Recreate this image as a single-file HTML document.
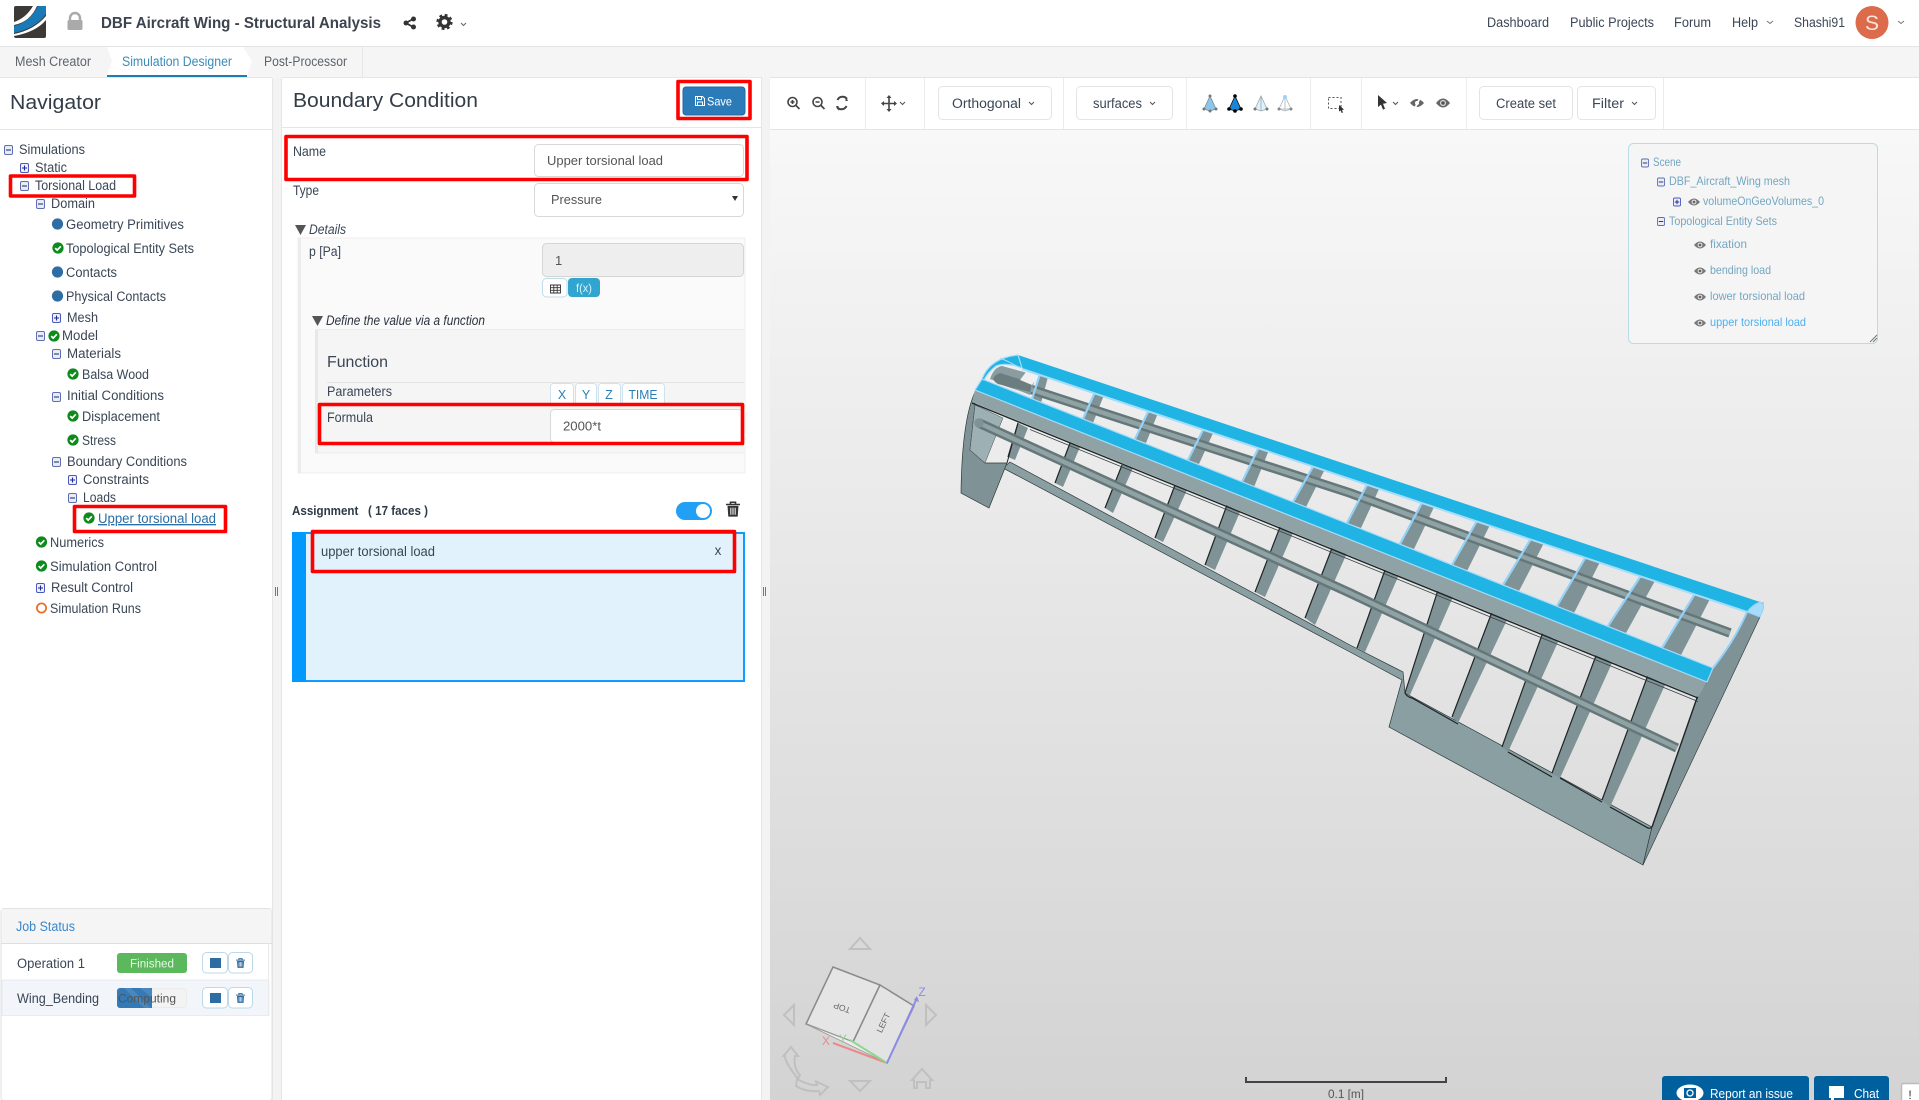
<!DOCTYPE html>
<html lang="en"><head><meta charset="utf-8"><title>DBF Aircraft Wing - Structural Analysis</title>
<style>
html,body{margin:0;padding:0;background:#fff;overflow:hidden;width:1919px;height:1100px}
svg{display:block}
text{font-family:"Liberation Sans",sans-serif;font-size:13.5px;fill:#3a4656;white-space:pre}
.h{font-size:20.5px;fill:#333d48}
.tab{font-size:13.5px;fill:#5d646c}
.sc{font-size:12px;fill:#73a6c2}
.gr{fill:#555}
</style></head><body>
<svg xmlns="http://www.w3.org/2000/svg" width="1919" height="1100" viewBox="0 0 1919 1100">
<defs>
<linearGradient id="vb" x1="0" y1="129" x2="0" y2="1100" gradientUnits="userSpaceOnUse"><stop offset="0" stop-color="#f8f8f8"/><stop offset="1" stop-color="#d3d3d3"/></linearGradient>
<symbol id="mi" viewBox="0 0 9 10" overflow="visible"><rect x=".5" y=".5" width="8" height="9" rx="1.5" fill="#e9ecf6" stroke="#5d6fb3"/><path d="M2 5h5" stroke="#2b3a70" stroke-width="1.1"/></symbol>
<symbol id="pl" viewBox="0 0 9 10" overflow="visible"><rect x=".5" y=".5" width="8" height="9" rx="1.5" fill="#eef0fb" stroke="#4a58b8"/><path d="M2 5h5M4.5 2.5v5" stroke="#1c2a9a" stroke-width="1.1"/></symbol>
<symbol id="ck" viewBox="0 0 12 12" overflow="visible"><circle cx="6" cy="6" r="5.6" fill="#0d8a1c"/><path d="M3.2 6.1l2 2 3.6-3.8" fill="none" stroke="#fff" stroke-width="1.7"/></symbol>
<symbol id="ey" viewBox="0 0 12 8" overflow="visible"><path d="M0 4Q6-3 12 4Q6 11 0 4Z" fill="#777"/><circle cx="6" cy="4" r="2.4" fill="#e8e8e8"/><circle cx="6" cy="4" r="1.4" fill="#666"/></symbol>
<symbol id="tr" viewBox="0 0 11 12" overflow="visible"><path d="M0 2.5h11M3.5 2.5V.7h4v1.8" fill="none" stroke="currentColor" stroke-width="1.2"/><path d="M1.2 3.5h8.6l-.6 8.5H1.8z" fill="currentColor"/><path d="M3.8 5v5.5M5.5 5v5.5M7.2 5v5.5" stroke="#fff" stroke-width=".8"/></symbol>
</defs>

<!-- top bar -->
<rect width="1919" height="1100" fill="#fff"/>
<path d="M0 46.5h1919" stroke="#e4e4e4"/>
<rect x="14" y="6" width="32" height="32" rx="2" fill="#3c3936"/>
<path d="M38 6h8v8Q36 28 14 33v-7Q30 22 38 6Z" fill="#1a7ab8"/>
<path d="M33 6h4Q30 22 14 25v-3Q26 18 33 6Z" fill="#fff"/>
<path d="M46 16v4Q36 32 14 36v-2Q34 30 46 16Z" fill="#fff"/>
<path d="M70 21v-3a5 5 0 0 1 10 0v3" fill="none" stroke="#aaa" stroke-width="2.4"/><rect x="67.500" y="20" width="15" height="10" rx="1.5" fill="#aaa"/>
<text x="101" y="28" textLength="280" lengthAdjust="spacingAndGlyphs" style="font-size:15.5px;font-weight:bold;fill:#3c4450">DBF Aircraft Wing - Structural Analysis</text>
<path d="M413 19L406 23L413 27" fill="none" stroke="#333" stroke-width="1.8"/><circle cx="413.500" cy="19" r="2.500" fill="#333"/><circle cx="406" cy="23" r="2.500" fill="#333"/><circle cx="413.500" cy="27" r="2.500" fill="#333"/>
<circle cx="444.500" cy="22" r="4.500" fill="none" stroke="#333" stroke-width="3.4"/><circle cx="444.500" cy="22" r="7" fill="none" stroke="#333" stroke-width="2.2" stroke-dasharray="2.8 2.7"/>
<path d="M461 23l2.500 2.500l2.500-2.500" fill="none" stroke="#666"/>
<g>
<text x="1487" y="27" textLength="62" lengthAdjust="spacingAndGlyphs">Dashboard</text>
<text x="1570" y="27" textLength="84" lengthAdjust="spacingAndGlyphs">Public Projects</text>
<text x="1674" y="27" textLength="37" lengthAdjust="spacingAndGlyphs">Forum</text>
<text x="1732" y="27" textLength="26" lengthAdjust="spacingAndGlyphs">Help</text>
<text x="1794" y="27" textLength="51" lengthAdjust="spacingAndGlyphs">Shashi91</text>
</g>
<path d="M1767 21l3 2.500l3-2.500M1898 21l3 2.500l3-2.500" fill="none" stroke="#777"/>
<circle cx="1872" cy="22.500" r="16.500" fill="#dc6b4b"/>
<text x="1872" y="30" text-anchor="middle" style="font-size:21px;fill:#fbe4dc">S</text>

<!-- tabs -->
<rect y="47" width="1919" height="31" fill="#f5f5f5"/>
<path d="M107 47H243L252 61L247 75V77H107V75L112 61Z" fill="#fff"/>
<rect x="107" y="75" width="140" height="2" fill="#1c7cb4"/>
<path d="M362.500 47v30" stroke="#e6e6e6"/>
<text class="tab" x="15" y="66" textLength="76" lengthAdjust="spacingAndGlyphs">Mesh Creator</text>
<text class="tab" x="122" y="66" textLength="110" lengthAdjust="spacingAndGlyphs" style="fill:#3a8cb9">Simulation Designer</text>
<text class="tab" x="264" y="66" textLength="83" lengthAdjust="spacingAndGlyphs">Post-Processor</text>

<!-- panels -->
<rect x="0" y="78" width="272" height="1022" fill="#fff"/>
<rect x="272" y="78" width="10" height="1022" fill="#f3f3f3"/>
<path d="M272.500 78v1022M281.500 78v1022" stroke="#e6e6e6"/>
<path d="M0 77.500h272M282 77.500h480M0 129.500h272M282 127.500h479" stroke="#e6e6e6"/>
<rect x="761" y="78" width="9" height="1022" fill="#f3f3f3"/>
<path d="M761.500 78v1022" stroke="#e6e6e6"/>
<path d="M275.500 587v9M277.500 587v9M763.500 587v9M765.500 587v9" stroke="#777"/>
<text class="h" x="10" y="109" textLength="91" lengthAdjust="spacingAndGlyphs">Navigator</text>
<text class="h" x="293" y="107" textLength="185" lengthAdjust="spacingAndGlyphs">Boundary Condition</text>

<!-- tree -->
<use href="#mi" x="4" y="145" width="9" height="10"/><text x="19" y="154" textLength="66" lengthAdjust="spacingAndGlyphs">Simulations</text>
<use href="#pl" x="20" y="163" width="9" height="10"/><text x="35" y="172" textLength="32" lengthAdjust="spacingAndGlyphs">Static</text>
<use href="#mi" x="20" y="181" width="9" height="10"/><text x="35" y="190" textLength="81" lengthAdjust="spacingAndGlyphs">Torsional Load</text>
<use href="#mi" x="36" y="199" width="9" height="10"/><text x="51" y="208" textLength="44" lengthAdjust="spacingAndGlyphs">Domain</text>
<circle cx="57.500" cy="224" r="5.600" fill="#2e6da4"/><text x="66" y="229" textLength="118" lengthAdjust="spacingAndGlyphs">Geometry Primitives</text>
<use href="#ck" x="52" y="242" width="12" height="12"/><text x="66" y="253" textLength="128" lengthAdjust="spacingAndGlyphs">Topological Entity Sets</text>
<circle cx="57.500" cy="272" r="5.600" fill="#2e6da4"/><text x="66" y="277" textLength="51" lengthAdjust="spacingAndGlyphs">Contacts</text>
<circle cx="57.500" cy="296" r="5.600" fill="#2e6da4"/><text x="66" y="301" textLength="100" lengthAdjust="spacingAndGlyphs">Physical Contacts</text>
<use href="#pl" x="52" y="313" width="9" height="10"/><text x="67" y="322" textLength="31" lengthAdjust="spacingAndGlyphs">Mesh</text>
<use href="#mi" x="36" y="331" width="9" height="10"/><use href="#ck" x="48" y="330" width="12" height="12"/><text x="62" y="340" textLength="36" lengthAdjust="spacingAndGlyphs">Model</text>
<use href="#mi" x="52" y="349" width="9" height="10"/><text x="67" y="358" textLength="54" lengthAdjust="spacingAndGlyphs">Materials</text>
<use href="#ck" x="67" y="368" width="12" height="12"/><text x="82" y="379" textLength="67" lengthAdjust="spacingAndGlyphs">Balsa Wood</text>
<use href="#mi" x="52" y="392" width="9" height="10"/><text x="67" y="400" textLength="97" lengthAdjust="spacingAndGlyphs">Initial Conditions</text>
<use href="#ck" x="67" y="410" width="12" height="12"/><text x="82" y="421" textLength="78" lengthAdjust="spacingAndGlyphs">Displacement</text>
<use href="#ck" x="67" y="434" width="12" height="12"/><text x="82" y="445" textLength="34" lengthAdjust="spacingAndGlyphs">Stress</text>
<use href="#mi" x="52" y="457" width="9" height="10"/><text x="67" y="466" textLength="120" lengthAdjust="spacingAndGlyphs">Boundary Conditions</text>
<use href="#pl" x="68" y="475" width="9" height="10"/><text x="83" y="484" textLength="66" lengthAdjust="spacingAndGlyphs">Constraints</text>
<use href="#mi" x="68" y="493" width="9" height="10"/><text x="83" y="502" textLength="33" lengthAdjust="spacingAndGlyphs">Loads</text>
<use href="#ck" x="83" y="512" width="12" height="12"/><text x="98" y="523" textLength="118" lengthAdjust="spacingAndGlyphs" style="fill:#2a6ea6;text-decoration:underline">Upper torsional load</text>
<use href="#ck" x="35.500" y="536" width="12" height="12"/><text x="50" y="547" textLength="54" lengthAdjust="spacingAndGlyphs">Numerics</text>
<use href="#ck" x="35.500" y="560" width="12" height="12"/><text x="50" y="571" textLength="107" lengthAdjust="spacingAndGlyphs">Simulation Control</text>
<use href="#pl" x="36" y="583" width="9" height="10"/><text x="51" y="592" textLength="82" lengthAdjust="spacingAndGlyphs">Result Control</text>
<circle cx="41.500" cy="608" r="4.600" fill="none" stroke="#e8702a" stroke-width="1.800"/><text x="50" y="613" textLength="91" lengthAdjust="spacingAndGlyphs">Simulation Runs</text>

<!-- job status -->
<rect x="1" y="908.500" width="271" height="192" rx="3" fill="#fff" stroke="#e2e2e2"/>
<rect x="1.500" y="909" width="270" height="34" fill="#f5f5f5"/><path d="M1 943.500h271" stroke="#dfdfdf"/>
<text x="16" y="931" textLength="59" lengthAdjust="spacingAndGlyphs" style="fill:#3b87c9">Job Status</text>
<rect x="2" y="980" width="267" height="35.500" fill="#f2f5fa" stroke="#e4e8ee" stroke-width=".8"/>
<path d="M268.500 944v72" stroke="#eaeaea"/>
<text x="17" y="968" textLength="68" lengthAdjust="spacingAndGlyphs">Operation 1</text>
<text x="17" y="1003" textLength="82" lengthAdjust="spacingAndGlyphs">Wing_Bending</text>
<rect x="117" y="953" width="70" height="20" rx="3" fill="#5cb85c"/>
<text x="152" y="967.500" text-anchor="middle" textLength="44" lengthAdjust="spacingAndGlyphs" style="font-size:11.500px;fill:#e8f8e8">Finished</text>
<rect x="117.500" y="988.500" width="69" height="19" rx="3" fill="#f3f3f3" stroke="#ebebeb"/>
<path d="M120 988h32v20h-32a3 3 0 0 1-3-3v-14a3 3 0 0 1 3-3Z" fill="#337ab7"/>
<path d="M124 988h7l20 20h-7ZM140 988h10l2 2v8Z" fill="#5a94c6" opacity=".55"/>
<text x="118" y="1002.500" textLength="58" lengthAdjust="spacingAndGlyphs" style="font-size:11.500px;fill:#555">Computing</text>
<g fill="#fff" stroke="#bcd9e8"><rect x="202.500" y="952.500" width="25" height="20.500" rx="4"/><rect x="228.500" y="952.500" width="24" height="20.500" rx="4"/><rect x="202.500" y="987.500" width="25" height="20.500" rx="4"/><rect x="228.500" y="987.500" width="24" height="20.500" rx="4"/></g>
<rect x="210" y="958" width="11" height="10" fill="#2e6da4"/><rect x="210" y="993" width="11" height="10" fill="#2e6da4"/>
<g color="#2e6da4"><use href="#tr" x="236" y="958" width="9" height="10"/><use href="#tr" x="236" y="993" width="9" height="10"/></g>

<!-- boundary form -->
<rect x="683" y="87" width="62" height="28" rx="3" fill="#2b7bb9" stroke="#216aa3"/>
<path d="M695.500 96.500h7l2 2v7h-9zM697.500 96.500v3h4v-3M697.500 105.500v-3.500h5v3.500" fill="none" stroke="#fff"/>
<text x="707" y="105.500" textLength="25" lengthAdjust="spacingAndGlyphs" style="font-size:12px;fill:#fff">Save</text>

<text x="293" y="156" textLength="33" lengthAdjust="spacingAndGlyphs">Name</text>
<rect x="534.500" y="144.500" width="209" height="32" rx="4" fill="#fff" stroke="#d8d8d8"/>
<text class="gr" x="547" y="165" textLength="116" lengthAdjust="spacingAndGlyphs" style="font-size:13px">Upper torsional load</text>
<text x="293" y="195" textLength="26" lengthAdjust="spacingAndGlyphs">Type</text>
<rect x="534.500" y="183.500" width="209" height="33" rx="4" fill="#fff" stroke="#d8d8d8"/>
<text class="gr" x="551" y="204" textLength="51" lengthAdjust="spacingAndGlyphs" style="font-size:13px">Pressure</text>
<path d="M732 196h6l-3 5z" fill="#333"/>

<path d="M295 225h11l-5.500 10z" fill="#555"/>
<text x="309" y="234" textLength="37" lengthAdjust="spacingAndGlyphs" style="font-style:italic">Details</text>
<rect x="298" y="238" width="447" height="235" fill="#fafafa" stroke="#efefef"/>
<rect x="298" y="238" width="3" height="235" fill="#ececec"/>
<text x="309" y="256" textLength="32" lengthAdjust="spacingAndGlyphs">p [Pa]</text>
<rect x="542.500" y="243.500" width="201" height="33" rx="4" fill="#eee" stroke="#d5d5d5"/>
<text class="gr" x="555" y="265" style="font-size:13px">1</text>
<rect x="542.500" y="278.500" width="24.500" height="18.500" rx="4" fill="#fff" stroke="#bfdde9"/>
<path d="M550.500 285h10v8h-10zM550.500 287.700h10M550.500 290.300h10M553.800 285v8M557.200 285v8" fill="none" stroke="#333" stroke-width=".9"/>
<rect x="568" y="278" width="32" height="19" rx="4" fill="#31a5cf"/>
<text x="584" y="292" text-anchor="middle" textLength="16" lengthAdjust="spacingAndGlyphs" style="font-size:12px;fill:#d8f2fb">f(x)</text>

<path d="M312 316h11l-5.500 10z" fill="#555"/>
<text x="326" y="325" textLength="159" lengthAdjust="spacingAndGlyphs" style="font-style:italic;fill:#2b3340">Define the value via a function</text>
<rect x="315" y="329" width="429" height="124" fill="#f5f5f5"/>
<path d="M316.500 329v124" stroke="#e8e8e8" stroke-width="3"/><path d="M315 329.500h429M315 453h429" stroke="#ececec"/>
<text x="327" y="367" textLength="61" lengthAdjust="spacingAndGlyphs" style="font-size:16px">Function</text>
<path d="M327 382.500h417" stroke="#e4e4e4"/>
<text x="327" y="396" textLength="65" lengthAdjust="spacingAndGlyphs">Parameters</text>
<g fill="#fff" stroke="#cfe3ee"><rect x="550.500" y="383.500" width="23" height="22" rx="3"/><rect x="575.500" y="383.500" width="21" height="22" rx="3"/><rect x="598.500" y="383.500" width="22" height="22" rx="3"/><rect x="622.500" y="383.500" width="42" height="22" rx="3"/></g>
<g style="fill:#2a7fb5"><text x="562" y="399" text-anchor="middle" style="font-size:12.500px;fill:#2a7fb5">X</text><text x="586" y="399" text-anchor="middle" style="font-size:12.500px;fill:#2a7fb5">Y</text><text x="609" y="399" text-anchor="middle" style="font-size:12.500px;fill:#2a7fb5">Z</text><text x="643" y="399" text-anchor="middle" textLength="29" lengthAdjust="spacingAndGlyphs" style="font-size:12.500px;fill:#2a7fb5">TIME</text></g>
<text x="327" y="422" textLength="46" lengthAdjust="spacingAndGlyphs">Formula</text>
<rect x="550.500" y="409.500" width="192" height="33" rx="4" fill="#fff" stroke="#d8d8d8"/>
<text class="gr" x="563" y="430.500" textLength="38" lengthAdjust="spacingAndGlyphs" style="font-size:13px">2000*t</text>

<text x="292" y="515" textLength="136" lengthAdjust="spacingAndGlyphs" style="font-weight:bold;font-size:13px;fill:#2e3a48">Assignment   ( 17 faces )</text>
<rect x="676" y="502" width="36" height="18" rx="9" fill="#21a0f5"/><circle cx="703" cy="511" r="7" fill="#fff"/>
<g color="#333"><use href="#tr" x="726" y="501" width="14" height="16"/></g>
<rect x="293" y="533" width="451" height="148" fill="#e1f2fd" stroke="#0e9cff" stroke-width="2"/>
<rect x="292" y="532" width="14" height="150" fill="#0299ff"/>
<text x="321" y="556" textLength="114" lengthAdjust="spacingAndGlyphs">upper torsional load</text>
<text x="718" y="555" text-anchor="middle">x</text>

<!-- viewer -->
<rect x="770" y="78" width="1149" height="1022" fill="url(#vb)"/>
<rect x="770" y="78" width="1149" height="51" fill="#fff"/>
<path d="M770 77.500h1149M770 129.500h1149" stroke="#e4e4e4"/>
<path d="M865.500 78v51M924.500 78v51M1063.500 78v51M1186.500 78v51M1310.500 78v51M1361.500 78v51M1466.500 78v51M1663.500 78v51" stroke="#ececec"/>
<g fill="none" stroke="#444" stroke-width="1.600">
<circle cx="792.500" cy="102" r="4.500"/><path d="M796 105.500l3.500 3.500M790.500 102h4M792.500 100v4"/>
<circle cx="817.500" cy="102" r="4.500"/><path d="M821 105.500l3.500 3.500M815.500 102h4"/>
<path d="M847 99a5.500 5.500 0 0 0-9.500 1M837 107a5.500 5.500 0 0 0 9.500-1" stroke-width="2"/>
<path d="M889 97v13M883 103.500h12" />
</g>
<path d="M889 95l2.500 3h-5zM889 112l2.500-3h-5zM881 103.500l3-2.500v5zM897 103.500l-3-2.500v5zM845.500 96v5h2.500zM838.500 111v-5h-2.500z" fill="#444"/>
<g fill="#fff" stroke="#e4e4e4"><rect x="938.500" y="86.500" width="113" height="33" rx="4"/><rect x="1076.500" y="86.500" width="96" height="33" rx="4"/><rect x="1479.500" y="86.500" width="93" height="33" rx="4"/><rect x="1577.500" y="86.500" width="78" height="33" rx="4"/></g>
<path d="M900 102l2.500 2.500l2.500-2.500M1029 102l2.500 2.500l2.500-2.500M1150 102l2.500 2.500l2.500-2.500M1393 102l2.500 2.500l2.500-2.500M1632 102l2.500 2.500l2.500-2.500" fill="none" stroke="#555"/>
<text x="952" y="108" textLength="69" lengthAdjust="spacingAndGlyphs">Orthogonal</text>
<text x="1093" y="108" textLength="49" lengthAdjust="spacingAndGlyphs">surfaces</text>
<text x="1496" y="108" textLength="60" lengthAdjust="spacingAndGlyphs">Create set</text>
<text x="1592" y="108" textLength="32" lengthAdjust="spacingAndGlyphs">Filter</text>
<path d="M1210 96l-6 13l6 2l6-2z" fill="#8cc6ea" stroke="#7a8c94" stroke-width=".8"/><circle cx="1210" cy="96" r="1.500" fill="#777"/><circle cx="1204" cy="109" r="1.500" fill="#777"/><circle cx="1216" cy="109" r="1.500" fill="#777"/><circle cx="1210" cy="111" r="1.500" fill="#777"/>
<path d="M1235 96l-6 13l6 2l6-2z" fill="#1a86d8" stroke="#111" stroke-width=".8"/><circle cx="1235" cy="96" r="1.800" fill="#000"/><circle cx="1229" cy="109" r="1.800" fill="#000"/><circle cx="1241" cy="109" r="1.800" fill="#000"/><circle cx="1235" cy="111" r="1.800" fill="#000"/>
<path d="M1261 96l-6 13l6 2l6-2zM1261 96v15" fill="#dff1fb" stroke="#9aa8ae" stroke-width=".8"/><circle cx="1255" cy="109" r="1.500" fill="#777"/><circle cx="1267" cy="109" r="1.500" fill="#777"/>
<path d="M1285 96l-6 13l6 2l6-2zM1285 96v15M1279 109h12" fill="none" stroke="#aab4b8" stroke-width=".8"/><circle cx="1285" cy="97" r="2" fill="#9ad5f5"/><circle cx="1279" cy="109" r="1.500" fill="#888"/><circle cx="1291" cy="109" r="1.500" fill="#888"/>
<rect x="1328.500" y="97.500" width="12.500" height="11" fill="none" stroke="#555" stroke-dasharray="2 2"/>
<path d="M1339 105l5 4.500l-2 .5l1 2.500l-1.300.5l-1-2.500l-1.700 1z" fill="#333"/>
<path d="M1378 95l9 8l-4 .8l2 5l-2 .8l-2-5l-3 2.400z" fill="#333"/>
<path d="M1410 103Q1417 95 1424 103Q1417 111 1410 103Z" fill="#666"/><circle cx="1417" cy="103" r="2" fill="#fff"/><path d="M1421 96l-7 14" stroke="#fff" stroke-width="1.800"/>
<path d="M1436 103Q1443 94 1450 103Q1443 112 1436 103Z" fill="#666"/><circle cx="1443" cy="103" r="3" fill="#ddd"/><circle cx="1443" cy="103" r="1.800" fill="#555"/>

<!-- wing -->
<g>
<!-- rear deck with thin trailing strip -->
<path d="M1010 462L1350 645L1403 672L1405 693L1652 827L1643 865L1389 727L1402 680L1350 652L1003 468Z" fill="#8a9fa2" stroke="#2c3638" stroke-width=".7"/>
<!-- lower ribs -->
<g fill="#7f9295">
<path d="M1018 423L1028 428L1015 460L1008 457Z"/>
<path d="M1070 443L1080 447L1063 487L1055 483Z"/>
<path d="M1122 465L1133 468L1113 513L1105 508Z"/>
<path d="M1175 485L1187 490L1163 542L1155 538Z"/>
<path d="M1227 505L1240 512L1215 570L1205 565Z"/>
<path d="M1280 527L1293 533L1265 597L1255 592Z"/>
<path d="M1332 548L1347 553L1315 625L1305 618Z"/>
<path d="M1385 570L1398 577L1365 652L1357 648Z"/>
<path d="M1438 590L1453 597L1410 695L1405 693Z"/>
<path d="M1492 612L1507 620L1458 723L1452 717Z"/>
<path d="M1543 632L1558 642L1508 752L1502 747Z"/>
<path d="M1597 653L1612 663L1560 778L1552 773Z"/>
<path d="M1648 675L1665 685L1610 807L1602 800Z"/>
</g>
<g fill="none" stroke="#1d2527" stroke-width="1.200">
<path d="M1018 423L1008 457M1070 443L1055 483M1122 465L1105 508M1175 485L1155 538M1227 505L1205 565M1280 527L1255 592M1332 548L1305 618M1385 570L1357 648M1438 590L1405 693M1492 612L1452 717M1543 632L1502 747M1597 653L1552 773M1648 675L1602 800"/>
<path d="M1405 693Q1407 697 1412 698L1458 724M1508 752L1552 777M1560 778L1602 802M1610 807L1648 828Q1652 829 1654 825"/>
</g>
<!-- left rib end -->
<path d="M975 392Q962 420 961 493L989 508L1007 463L985 463L970 450L975 405Z" fill="#7f9295" stroke="#2c3638" stroke-width=".7"/>
<path d="M975 405L1003 418L985 463L970 450Z" fill="#9db0b3" stroke="#485456" stroke-width=".5"/>
<path d="M1007 463L1018 423" stroke="#1d2527" stroke-width="1"/>
<!-- upper ribs -->
<g fill="#7f9295">
<path d="M1040 374L1048 377L1041 403L1032 399Z"/>
<path d="M1095 392L1104 395L1093 423L1083 419Z"/>
<path d="M1149 410L1158 413L1146 443L1135 439Z"/>
<path d="M1204 428L1214 431L1199 464L1188 460Z"/>
<path d="M1259 447L1269 450L1254 487L1242 482Z"/>
<path d="M1314 465L1325 469L1306 507L1293 502Z"/>
<path d="M1368 483L1380 487L1361 528L1347 523Z"/>
<path d="M1423 501L1435 505L1414 549L1400 544Z"/>
<path d="M1478 519L1491 523L1467 571L1452 565Z"/>
<path d="M1532 537L1545 541L1519 591L1503 585Z"/>
<path d="M1587 555L1601 560L1574 613L1557 606Z"/>
<path d="M1642 574L1656 579L1626 633L1608 626Z"/>
<path d="M1696 592L1711 597L1681 655L1662 648Z"/>
</g>
<!-- rods -->
<g fill="none">
<path d="M979 423L1350 593L1677 748" stroke="#66777a" stroke-width="9.500"/>
<path d="M979 423L1350 593L1677 748" stroke="#8fa3a5" stroke-width="4.500"/>
<path d="M999 379L1350 493L1730 633" stroke="#66777a" stroke-width="9.500"/>
<path d="M999 379L1350 493L1730 633" stroke="#8fa3a5" stroke-width="4.500"/>
</g>
<circle cx="979" cy="423" r="4.700" fill="#7f9295"/>
<circle cx="999" cy="379" r="4.700" fill="#7f9295"/>
<!-- light rib lines -->
<g fill="none" stroke="#93d2f8" stroke-width="2.200">
<path d="M1040 374L1032 399M1095 392L1083 419M1149 410L1135 439M1204 428L1188 460M1259 447L1242 482M1314 465L1293 502M1368 483L1347 523M1423 501L1400 544M1478 519L1452 565M1532 537L1503 585M1587 555L1557 606M1642 574L1608 626M1696 592L1662 648"/>
</g>
<!-- right end rib -->
<path d="M1763 603L1760 617L1643 865L1652 827L1698 695L1707 682L1713 668Q1735 640 1747 612Z" fill="#7f9295" stroke="#2c3638" stroke-width=".6"/>
<path d="M1652 827L1698 695" stroke="#1d2527" stroke-width="1.400"/>
<path d="M1713 668Q1735 640 1747 612" fill="none" stroke="#93d2f8" stroke-width="2"/>
<!-- grey strip -->
<path d="M975 390L1707 682L1698 697L972 402Z" fill="#8fa3a6"/>
<path d="M972 403L1698 698" stroke="#1d2527" stroke-width="1.400"/>
<path d="M1030 429.500L1698 701.500" stroke="#394345" stroke-width=".8"/>
<!-- blue strips -->
<path d="M982 379L1713 668L1707 682L975 390Z" fill="#1fb4e4" stroke="#a5dcf9" stroke-width="1.200"/>
<path d="M1018 355L1760 602L1747 612L1022 368Z" fill="#1fb4e4"/>
<path d="M1022 369L1747 612" stroke="#a5dcf9" stroke-width="2"/>
<!-- left tip -->
<path d="M982 379Q990 358 1018 355L1022 368Q1006 362 996 366Q988 372 984 380Z" fill="#1fb4e4" stroke="#a5dcf9" stroke-width="1.200"/>
<path d="M1000 358Q1010 362 1020 368" fill="none" stroke="#a5dcf9" stroke-width="1"/>
<path d="M990 379Q994 367 1002 366L1024 372L1036 376L1030 395Z" fill="#8a9ca0"/>
<path d="M1000 373L1032 383L1030 392L998 384Q988 378 1000 373Z" fill="#6c7d80"/>
<path d="M1026 372L1038 376L1032 385L1020 380Z" fill="#f0f0f0"/>
<!-- right tip -->
<path d="M1760 602Q1765 604 1763 610L1760 617L1747 612Q1752 605 1760 602Z" fill="#a5dcf9" stroke="#93d2f8"/>
</g>

<!-- scene tree -->
<rect x="1628.500" y="143.500" width="249" height="200" rx="5" fill="#f5f5f5" stroke="#b9dbe8"/>
<path d="M1870 342l7-7M1873 342l4-4" stroke="#777"/>
<use href="#mi" x="1641" y="158.500" width="8" height="9"/><text class="sc" x="1653" y="166" textLength="28" lengthAdjust="spacingAndGlyphs">Scene</text>
<use href="#mi" x="1657" y="177.500" width="8" height="9"/><text class="sc" x="1669" y="185" textLength="121" lengthAdjust="spacingAndGlyphs">DBF_Aircraft_Wing mesh</text>
<use href="#pl" x="1673" y="197.500" width="8" height="9"/><use href="#ey" x="1688" y="198" width="12" height="8"/><text class="sc" x="1703" y="205" textLength="121" lengthAdjust="spacingAndGlyphs">volumeOnGeoVolumes_0</text>
<use href="#mi" x="1657" y="217" width="8" height="9"/><text class="sc" x="1669" y="225" textLength="108" lengthAdjust="spacingAndGlyphs">Topological Entity Sets</text>
<use href="#ey" x="1694" y="241" width="12" height="8"/><text class="sc" x="1710" y="248" textLength="37" lengthAdjust="spacingAndGlyphs">fixation</text>
<use href="#ey" x="1694" y="267" width="12" height="8"/><text class="sc" x="1710" y="274" textLength="61" lengthAdjust="spacingAndGlyphs">bending load</text>
<use href="#ey" x="1694" y="293" width="12" height="8"/><text class="sc" x="1710" y="300" textLength="95" lengthAdjust="spacingAndGlyphs">lower torsional load</text>
<use href="#ey" x="1694" y="319" width="12" height="8"/><text class="sc" x="1710" y="326" textLength="96" lengthAdjust="spacingAndGlyphs" style="fill:#4db0f0">upper torsional load</text>

<!-- gizmo -->
<g fill="none" stroke="#c0c0c0" stroke-width="2">
<path d="M850 949L860 938L870 949Z"/><path d="M794 1005L784 1015L794 1025Z"/><path d="M926 1005L936 1015L926 1025Z"/><path d="M850 1081H870L860 1091Z"/>
<path d="M917 1088h-3v-8h-2l10-11l10 11h-2v8h-4v-6h-9z"/>
<path d="M798 1079Q782 1058 786 1056h-2.500l7.500-9l7 9h-3Q793 1068 800 1075z"/>
<path d="M797 1079Q810 1086 817 1085l-1-3.500l12 5.500l-8 8l-1-4Q805 1092 796 1086z"/>
</g>
<path d="M833 967L880 985L853 1042L806 1024Z" fill="#e5e5e5" stroke="#8a8a8a" stroke-width="1.500"/>
<path d="M880 985L914 1006L887 1063L853 1042Z" fill="#e3e3e3" stroke="#8a8a8a" stroke-width="1.500"/>
<path d="M806 1024L853 1042L887 1063Z" fill="#ececec" stroke="#999" stroke-width=".8"/>
<path d="M887 1063L833 1043" stroke="#ea8a8a" stroke-width="2"/>
<path d="M887 1063L850 1040" stroke="#8fd68f" stroke-width="2"/>
<path d="M887 1063L917 998" stroke="#8b8be8" stroke-width="2"/>
<path d="M917 996l2 6l-5-2z" fill="#8b8be8"/>
<text x="922" y="996" text-anchor="middle" style="font-size:12px;fill:#8b8be8">Z</text>
<text x="843" y="1043" text-anchor="middle" style="font-size:12px;fill:#8fd68f">Y</text>
<text x="826" y="1045" text-anchor="middle" style="font-size:12px;fill:#ea8a8a">X</text>
<text transform="translate(843 1005) rotate(200)" text-anchor="middle" style="font-size:8.500px;fill:#666">TOP</text>
<text transform="translate(886 1024) rotate(-65)" text-anchor="middle" style="font-size:8.500px;fill:#666">LEFT</text>

<!-- scale bar -->
<path d="M1246 1077v5h200v-5" fill="none" stroke="#444" stroke-width="2"/>
<text x="1328" y="1098" textLength="36" lengthAdjust="spacingAndGlyphs" style="font-size:12px;fill:#555">0.1 [m]</text>

<!-- bottom buttons -->
<path d="M1662 1100v-21a3 3 0 0 1 3-3h141a3 3 0 0 1 3 3v21z" fill="#00609e"/>
<path d="M1814 1100v-21a3 3 0 0 1 3-3h69a3 3 0 0 1 3 3v21z" fill="#00609e"/>
<ellipse cx="1690" cy="1093" rx="13.500" ry="8.500" fill="#fff"/><rect x="1684" y="1088" width="12" height="10" fill="#00609e"/><circle cx="1690" cy="1093" r="3" fill="none" stroke="#fff" stroke-width="1.300"/>
<text x="1710" y="1098" textLength="83" lengthAdjust="spacingAndGlyphs" style="font-size:12.500px;fill:#fff">Report an issue</text>
<path d="M1829 1086h15v12h-15z" fill="#fff" /><path d="M1831 1098v2h3v-2z" fill="#fff"/>
<text x="1854" y="1098" textLength="25" lengthAdjust="spacingAndGlyphs" style="font-size:12.500px;fill:#fff">Chat</text>
<rect x="1901.500" y="1083.500" width="20" height="20" rx="2" fill="#fff" stroke="#bbb" stroke-width="1.500"/>
<text x="1910" y="1099" text-anchor="middle" style="font-size:12px;fill:#333">!</text>

<!-- red annotation boxes -->
<g fill="none" stroke="#ff0000" stroke-width="3.600" stroke-linejoin="round">
<rect x="678" y="81.500" width="72" height="37"/>
<rect x="286" y="136.500" width="461" height="43"/>
<rect x="10.500" y="176" width="124" height="20"/>
<rect x="74.500" y="506.500" width="151" height="25"/>
<rect x="319.500" y="404.500" width="423" height="39"/>
<rect x="312.500" y="531.500" width="422" height="40"/>
</g>
</svg>
</body></html>
